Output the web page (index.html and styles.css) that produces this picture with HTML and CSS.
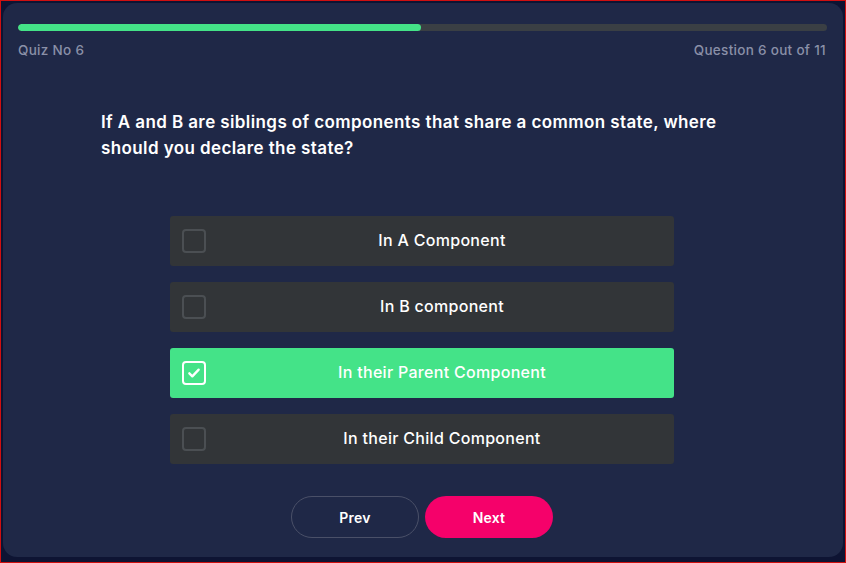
FILE: index.html
```html
<!DOCTYPE html>
<html>
<head>
<meta charset="utf-8">
<link rel="stylesheet" href="styles.css">
</head>
<body>
<div class="frame">
  <main class="card">
    <div class="progress"><div class="progress-fill" style="width:49.8%"></div></div>
    <div class="meta">
      <span>Quiz No 6</span>
      <span>Question 6 out of 11</span>
    </div>
    <h1 class="question">If A and B are siblings of components that share a common state, where should you declare the state?</h1>
    <ul class="options">
      <li class="option"><span class="check"></span><span class="label">In A Component</span></li>
      <li class="option"><span class="check"></span><span class="label">In B component</span></li>
      <li class="option selected"><span class="check"><svg viewBox="0 0 24 24" width="16" height="16"><path d="M5 12.5l4.5 4.5L19 7" fill="none" stroke="#fff" stroke-width="3.5" stroke-linecap="round" stroke-linejoin="round"/></svg></span><span class="label">In their Parent Component</span></li>
      <li class="option"><span class="check"></span><span class="label">In their Child Component</span></li>
    </ul>
    <div class="nav">
      <button class="btn btn-prev">Prev</button>
      <button class="btn btn-next">Next</button>
    </div>
  </main>
</div>
</body>
</html>
```

FILE: styles.css
```css
* { box-sizing: border-box; }
html, body { margin: 0; padding: 0; height: 100%; }
body {
  font-family: Inter, "Open Sans", sans-serif;
  background: #0e1433;
}
.frame {
  height: 563px;
  width: 846px;
  border: 1px solid #d01010;
  padding: 2px 2px 5px 2px;
  display: flex;
}
.card {
  flex: 1;
  background: #1f2847;
  border-radius: 14px;
  padding: 21px 16px 0 15px;
  display: flex;
  flex-direction: column;
}
.progress {
  height: 7px;
  background: #3a3f44;
  border-radius: 4px;
  overflow: hidden;
}
.progress-fill {
  height: 100%;
  background: #44e388;
  border-radius: 4px;
}
.meta {
  display: flex;
  justify-content: space-between;
  margin-top: 11px;
  padding-right: 1px;
  font-size: 13.5px;
  font-weight: 500;
  color: #8a90a8;
  letter-spacing: 0.3px;
}
.question {
  margin: 51px 0 0 83px;
  width: 625px;
  font-size: 17px;
  font-weight: 600;
  line-height: 26px;
  color: #ffffff;
  letter-spacing: 0.4px;
}
.options {
  list-style: none;
  margin: 55px 0 0 152px;
  padding: 0;
  width: 504px;
  display: flex;
  flex-direction: column;
  gap: 16px;
}
.option {
  height: 50px;
  background: #323538;
  border-radius: 3px;
  display: flex;
  align-items: center;
  padding: 0 0 0 12px;
  color: #ffffff;
  font-size: 16px;
  font-weight: 500;
  letter-spacing: 0.3px;
}
.option.selected { background: #44e388; }
.check {
  width: 24px;
  height: 24px;
  border: 2px solid #4b4f53;
  border-radius: 4px;
  display: flex;
  align-items: center;
  justify-content: center;
  flex: none;
}
.selected .check { border: 2.5px solid #ffffff; }
.label {
  flex: 1;
  text-align: center;
  padding: 0 0 3px 4px;
}
.nav {
  display: flex;
  justify-content: center;
  gap: 6px;
  margin-top: 32px;
  padding-right: 1px;
}
.btn {
  width: 128px;
  height: 42px;
  border-radius: 21px;
  font-family: inherit;
  font-size: 14px;
  font-weight: 600;
  letter-spacing: 0.2px;
  color: #ffffff;
  cursor: pointer;
}
.btn-prev {
  background: transparent;
  border: 1px solid #4a5068;
}
.btn-next {
  background: #f5016a;
  border: none;
}
```
